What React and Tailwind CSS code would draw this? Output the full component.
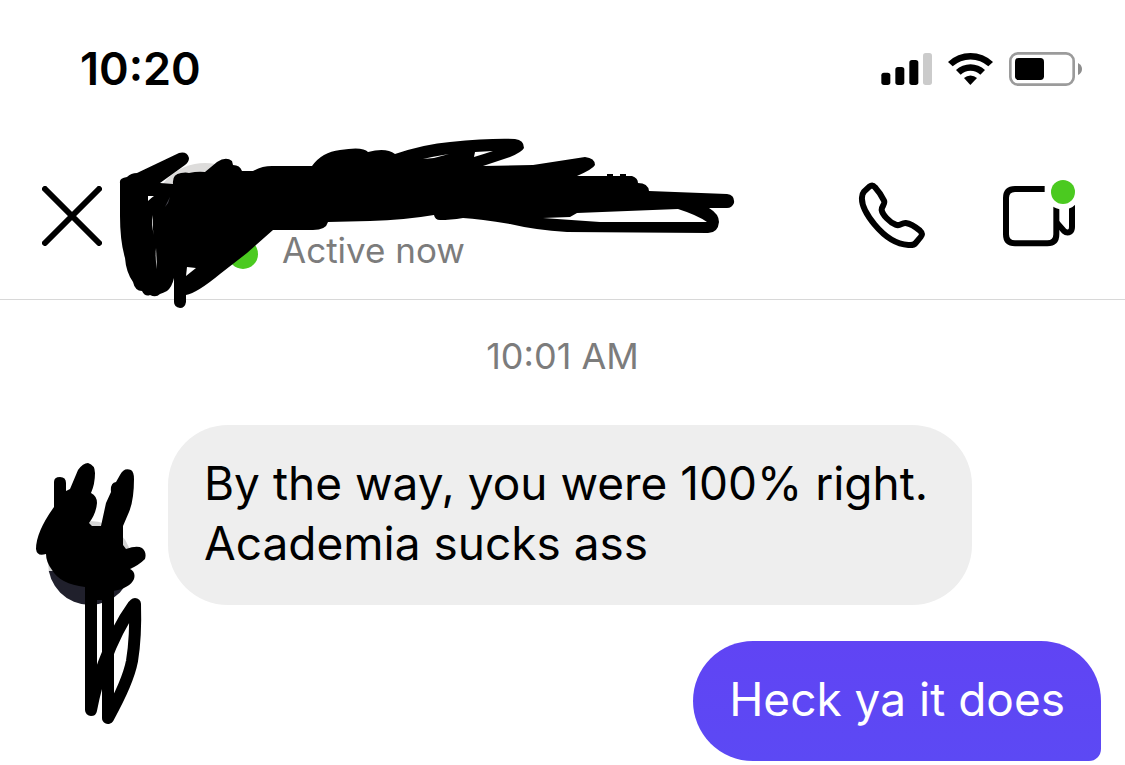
import { clsx } from "clsx";

const messages = [
  {
    id: 1,
    mine: false,
    text: "By the way, you were 100% right. Academia sucks ass",
  },
  { id: 2, mine: true, text: "Heck ya it does" },
];

function StatusIcons() {
  return (
    <div className="flex items-center gap-4">
      <svg width="51" height="34" viewBox="0 0 153 102" aria-hidden="true">
        <rect x="1" y="62" width="27" height="37" rx="8" />
        <rect x="43" y="45" width="27" height="54" rx="8" />
        <rect x="85" y="24" width="27" height="75" rx="8" />
        <rect x="126" y="3" width="27" height="96" rx="8" fill="#cbcbcb" />
      </svg>

      <svg width="45" height="34" viewBox="0 0 135 102" aria-hidden="true">
        <path d="M0 30 A98 98 0 0 1 135 30 L121 43 A79 79 0 0 0 14 43 Z" />
        <path d="M24 54 A63 63 0 0 1 111 54 L97 68 A43 43 0 0 0 38 68 Z" />
        <path d="M48 78 A29 29 0 0 1 87 78 L67 99 Z" />
      </svg>

      <svg width="73" height="34" viewBox="0 0 219 102" aria-hidden="true">
        <rect
          x="4"
          y="4"
          width="190"
          height="94"
          rx="23"
          fill="none"
          stroke="#9b9b9b"
          strokeWidth="8"
        />
        <rect x="18" y="18" width="87" height="66" rx="11" />
        <path d="M207 33 Q219 39 219 51 Q219 63 207 69 Z" fill="#8d8d8d" />
      </svg>
    </div>
  );
}

function CloseIcon() {
  return (
    <svg width="60" height="60" viewBox="0 0 60 60" aria-hidden="true">
      <path
        d="M3 3 L57 57 M57 3 L3 57"
        stroke="black"
        strokeWidth="6"
        strokeLinecap="round"
      />
    </svg>
  );
}

function PhoneIcon() {
  return (
    <svg width="68" height="68" viewBox="0 0 204 204" aria-hidden="true">
      <path
        d="M34 14 C42 8 46 10 51 16 C62 28 70 40 78 56 C83 66 70 73 71 84 C73 98 95 121 113 128 C127 134 130 122 143 123 C158 125 174 136 186 146 C195 154 192 160 188 165 L173 183 C168 189 161 190 151 189 C112 187 75 158 50 128 C27 100 10 68 12 46 C12 38 14 34 18 29 Z"
        fill="none"
        stroke="black"
        strokeWidth="18"
        strokeLinejoin="round"
      />
    </svg>
  );
}

function VideoIcon() {
  return (
    <svg
      className="overflow-visible"
      width="73"
      height="70"
      viewBox="0 0 219 210"
      aria-hidden="true"
    >
      <g fill="none" stroke="black" strokeWidth="18">
        <path d="M128 24 H39 Q12 24 12 51 V160 Q12 187 39 187 H136 Q163 187 163 160 V76" />
        <path d="M163 124 L186 150 Q195 158 204 152 Q210 148 210 138 V70" />
      </g>
      <circle cx="183" cy="33" r="53" fill="white" />
      <circle cx="183" cy="33" r="36" fill="#4bca20" />
    </svg>
  );
}

// marker strokes over the contact's photo and name
function NameScribble() {
  return (
    <svg
      className="pointer-events-none absolute -top-8 -left-10 max-w-none"
      width="640"
      height="180"
      viewBox="112 130 640 180"
      aria-hidden="true"
    >
      <path d="M120 182 Q119 177 127 176 Q131 172 137 172 L179 152 Q187 150 189 157 Q189 161 185 164 L160 182 L173 183 Q172 173 181 172 Q186 171 189 172 Q198 170 205 171 L217 161 Q226 155 232 160 L233 164 Q240 164 242 170 L253 170 Q262 165 272 165 L312 165 Q322 151 340 149 Q363 145 368 151 Q386 146 395 153 Q425 143 450 141 Q490 137 515 138 Q524 139 524 147 Q522 151 510 156 L483 165 L533 164 L585 156 Q595 157 595 164 Q593 168 577 175 L607 175 V173 H613 V175 H620 V173 H626 V175 H632 Q638 177 638 182 Q648 182 649 190 L727 193 Q735 194 734 202 Q732 207 727 207 L709 207 Q719 213 719 221 Q718 232 708 232 L567 231 Q535 229 510 223 Q480 218 463 217 Q450 219 440 219 Q435 219 434 214 Q405 219 370 220 L328 221 Q326 229 313 229 L273 229 L247 252 L220 273 Q197 292 186 294 V301 Q185 307 180 307 Q174 306 174 301 V277 Q172 286 167 290 Q163 292 160 293 Q156 297 150 294 Q145 296 142 290 Q135 290 133 281 Q126 271 125 257 Q120 240 120 215 Z" />
      <g fill="white">
        <path d="M148 195 L154 195 Q151 197 148 200 Z" />
        <path d="M153 214 L153 229 L154 234 Q151 224 153 214 Z" />
        <path d="M156 247 L157 268 Q155 258 156 247 Z" />
        <path d="M187 266 L196 267 Q191 271 186 275 Z" />
        <path d="M423 158 L434 157 L449 153 L432 156 Z" />
        <path d="M475 151 L493 150 Q484 153 474 156 Z" />
        <path d="M577 212 L678 208 Q697 214 707 221 L600 221 L543 217 L570 216 Z" />
      </g>
      <path d="M165 206 L170 196 L168 202 Z" fill="#55545f" />
    </svg>
  );
}

function AvatarScribble() {
  return (
    <svg
      className="pointer-events-none absolute -top-16 -left-4 max-w-none"
      width="120"
      height="276"
      viewBox="32 457 120 276"
      aria-hidden="true"
    >
      <path d="M54 482 Q54 477 60 477 Q66 477 66 483 V491 L70 489 L78 470 Q83 463 88 463 Q95 465 95 473 Q95 484 91 493 Q97 496 97 503 Q96 514 89 523 L92 526 H101 L106 503 L111 492 Q110 483 116 482 L120 475 Q124 467 131 470 Q134 472 134 479 Q134 500 129 512 L123 526 V545 L126 549 Q137 545 142 548 Q147 552 145 559 Q139 565 130 569 Q136 572 134 579 Q130 588 113 591 V600 H85 V587 Q60 584 52 570 Q46 562 46 554 Q37 557 36 549 Q36 532 54 507 Z" />
      <path
        d="M91 590 V710 Q96 684 104 663 Q117 628 133 606 L135 604 Q136 637 132 661 Q128 682 108 718 V590"
        fill="none"
        stroke="black"
        strokeWidth="12"
        strokeLinecap="round"
        strokeLinejoin="round"
      />
    </svg>
  );
}

function Message({ mine, text }) {
  return (
    <p
      className={clsx(
        "max-w-[804px] rounded-[60px] px-9 pt-7 pb-8 text-[46px] leading-[60px]",
        mine
          ? "self-end rounded-br-xl bg-linear-to-b from-[#6044f4] to-[#5c49f4] text-white"
          : "bg-[#eeeeee] text-black",
      )}
    >
      {text}
    </p>
  );
}

export default function App() {
  return (
    <div className="min-h-screen overflow-hidden bg-white font-['Inter',sans-serif] text-black">
      {/* STATUS BAR */}
      <div className="flex h-[130px] items-center justify-between pt-2 pr-[43px] pl-20">
        <time className="text-[45px] leading-[48px] font-semibold">10:20</time>
        <StatusIcons />
      </div>

      {/* HEADER */}
      <header className="flex h-[170px] items-center justify-between border-b border-[#d8d8d8] pt-0.5 pr-[50px] pl-[42px]">
        <div className="flex items-center gap-[50px]">
          <button aria-label="Close">
            <CloseIcon />
          </button>
          <div className="relative flex items-end gap-6">
            <div className="relative size-[106px] rounded-full bg-[#dddcdb]">
              <span className="absolute right-0 bottom-0 size-[30px] rounded-full bg-[#4bca20]" />
            </div>
            <p className="text-[35px] leading-[38px] text-[#7c7c7c]">
              Active now
            </p>
            <NameScribble />
          </div>
        </div>

        <div className="flex items-center gap-[76px]">
          <button aria-label="Audio call">
            <PhoneIcon />
          </button>
          <button aria-label="Video call">
            <VideoIcon />
          </button>
        </div>
      </header>

      {/* CHAT */}
      <main className="pt-9">
        <p className="text-center text-4xl leading-[41px] text-[#7c7c7c]">
          10:01 AM
        </p>
        <div className="mt-12 flex flex-col gap-9 pr-6 pl-12">
          <div className="flex items-end gap-9">
            <div className="relative size-[84px] shrink-0 rounded-full bg-linear-to-b from-[#d4d4d4] from-60% to-[#20202c] to-60%">
              <AvatarScribble />
            </div>
            <Message {...messages[0]} />
          </div>
          <Message {...messages[1]} />
        </div>
      </main>
    </div>
  );
}
